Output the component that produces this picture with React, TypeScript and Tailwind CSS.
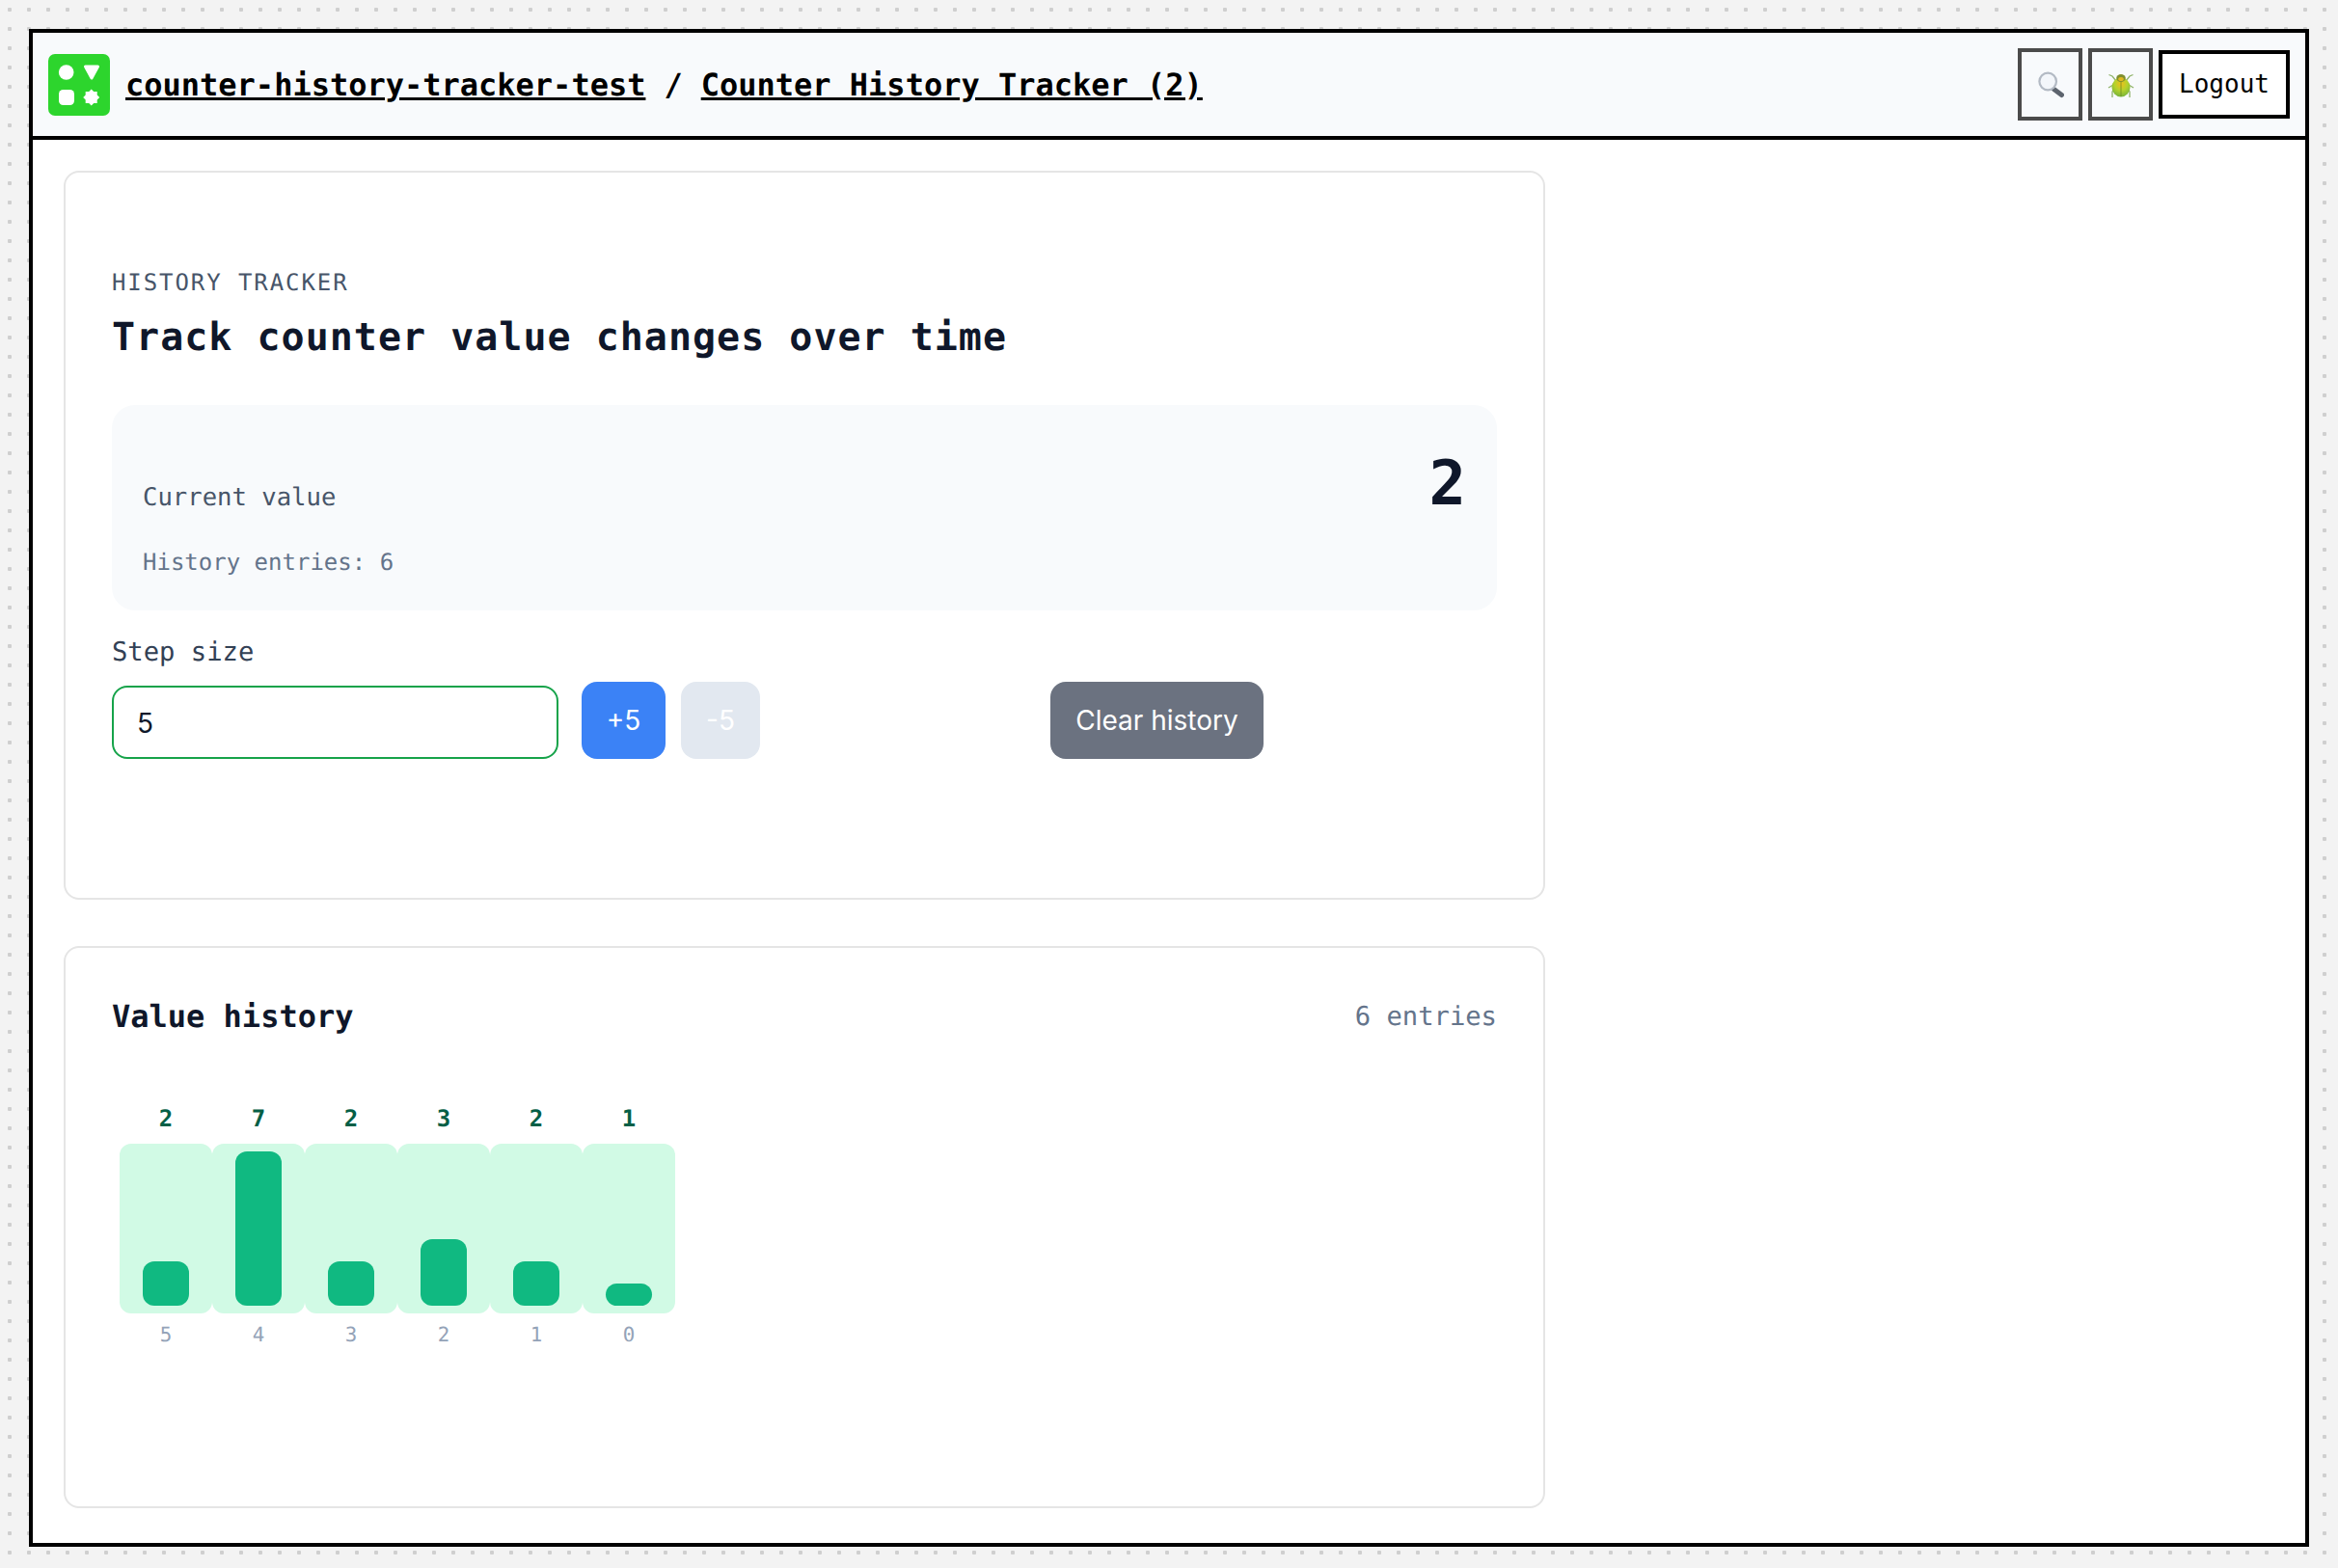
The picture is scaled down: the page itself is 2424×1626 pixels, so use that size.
const mono = "font-['DejaVu_Sans_Mono',monospace]";

const history = [
  { value: 2, index: 5 },
  { value: 7, index: 4 },
  { value: 2, index: 3 },
  { value: 3, index: 2 },
  { value: 2, index: 1 },
  { value: 1, index: 0 },
];

// 8 pointed badge in the logo
const starPoints = Array.from({ length: 16 }, (_, i) => {
  const r = i % 2 === 0 ? 8.5 : 6.5;
  const a = (i * Math.PI) / 8 - Math.PI / 2;
  return `${(44.7 + r * Math.cos(a)).toFixed(2)},${(45 + r * Math.sin(a)).toFixed(2)}`;
}).join(" ");

function Logo() {
  return (
    <svg viewBox="0 0 64 64" className="w-16 h-16 shrink-0">
      <rect width="64" height="64" rx="7" fill="#2dd52d" />
      <circle cx="18.700" cy="19" r="7.800" fill="#fff" />
      <path d="M38.500 13h13l-6.500 12z" fill="#fff" stroke="#fff" strokeWidth="3" strokeLinejoin="round" />
      <rect x="11" y="37" width="16" height="16" rx="4.500" fill="#fff" />
      <polygon points={starPoints} fill="#fff" />
    </svg>
  );
}

function Magnifier() {
  return (
    <svg viewBox="0 0 28 28" className="w-7 h-7">
      <line x1="17.500" y1="18.500" x2="25.500" y2="24.500" stroke="#5d646e" strokeWidth="5" strokeLinecap="round" />
      <circle cx="11.200" cy="10.500" r="8.800" fill="#f3f6fa" stroke="#b3bac4" strokeWidth="2.200" />
    </svg>
  );
}

function Bug() {
  return (
    <svg viewBox="0 0 28 28" className="w-7 h-7">
      <defs>
        <radialGradient id="shell" cx="50%" cy="32%" r="70%">
          <stop offset="0%" stopColor="#f0c01c" />
          <stop offset="50%" stopColor="#b4d22c" />
          <stop offset="100%" stopColor="#74b23c" />
        </radialGradient>
      </defs>
      <g stroke="#8fb36a" strokeWidth="1.300" fill="none">
        <path d="M9 10L5 5 1.500 3.500" />
        <path d="M19 10l4-5 3.500-1.500" />
        <path d="M6 14l-5 3" />
        <path d="M22 14l5 3" />
        <path d="M7 20l-2 1 0 6" />
        <path d="M21 20l2 1 0 6" />
      </g>
      <ellipse cx="14" cy="16.500" rx="9.500" ry="10" fill="url(#shell)" />
      <ellipse cx="14" cy="7" rx="4.800" ry="4" fill="#7f8f2e" />
      <ellipse cx="14" cy="8" rx="2.800" ry="2" fill="#e0b820" />
      <line x1="14" y1="11" x2="14" y2="26" stroke="#6a8a24" strokeWidth="0.800" />
    </svg>
  );
}

export default function App() {
  return (
    <div className={`min-h-[1626px] pt-[30px] px-[30px] bg-[#f3f3f3] bg-[radial-gradient(circle,#cfcfcf_2px,transparent_2.500px)] bg-[size:20px_20px] [text-rendering:geometricPrecision] ${mono}`}>
      <div className="h-[1574px] border-4 border-black bg-white flex flex-col">
        {/* Top bar */}
        <header className="h-[111px] shrink-0 border-b-4 border-black bg-[#f8fafc] flex items-center justify-between pl-4 pr-4">
          <div className="flex items-center gap-4 text-[32px] text-black font-bold">
            <Logo />
            <div className="flex gap-[19px]">
              <a className="underline">counter-history-tracker-test</a>
              <span>/</span>
              <a className="underline">Counter History Tracker (2)</a>
            </div>
          </div>
          <div className="flex items-center gap-[6px]">
            <button className="w-[67px] h-[75px] border-4 border-[#4b4b4b] flex items-center justify-center">
              <Magnifier />
            </button>
            <button className="w-[67px] h-[75px] border-4 border-[#4b4b4b] flex items-center justify-center">
              <Bug />
            </button>
            <button className="w-[136px] h-[71px] border-4 border-black bg-white text-[26px] text-black">Logout</button>
          </div>
        </header>

        <main className="flex-1 pt-8 pl-8 flex flex-col gap-[48px]">
          {/* Counter card */}
          <section className="w-[1536px] h-[756px] border-2 border-[#e5e5e5] rounded-2xl px-[48px] pt-[98px]">
            <p className="text-2xl leading-[32px] tracking-[1.920px] text-[#475569]">HISTORY TRACKER</p>
            <h1 className="mt-[13px] text-[40px] leading-[56px] tracking-[1px] font-bold text-[#0f172a]">Track counter value changes over time</h1>

            <div className="mt-[42px] h-[213px] rounded-3xl bg-[#f8fafc] px-8 pt-[42px] flex justify-between items-start">
              <div>
                <p className="mt-[36px] text-[25.600px] leading-[36px] text-[#475569]">Current value</p>
                <p className="mt-[33px] text-2xl leading-[32px] text-[#64748b]">History entries: 6</p>
              </div>
              <div className="mt-[8px] text-[64px] leading-[64px] font-bold text-[#0f172a]">2</div>
            </div>

            <label className="block mt-[28px] text-[27.200px] leading-[32px] text-[#334155]">Step size</label>
            <div className="mt-[14px] flex items-end font-['Inter',sans-serif] text-[28px]">
              <input
                readOnly
                value="5"
                className="w-[463px] h-[76px] rounded-2xl border-2 border-[#16a34a] bg-white px-[24px] pt-[2px] text-[28px] text-[#0f172a] outline-none"
              />
              <button className="ml-[24px] w-[87px] h-[80px] rounded-2xl bg-[#3b82f6] text-white">+5</button>
              <button className="ml-4 w-[82px] h-[80px] rounded-2xl bg-[#e2e8f0] text-white">-5</button>
              <button className="ml-[301px] w-[221px] h-[80px] rounded-2xl bg-[#6b7280] text-white">Clear history</button>
            </div>
          </section>

          {/* History card */}
          <section className="w-[1536px] h-[583px] border-2 border-[#e5e5e5] rounded-2xl px-[48px] pt-[46px]">
            <div className="flex items-center justify-between">
              <h2 className="text-[32px] leading-[48px] font-bold text-[#0f172a]">Value history</h2>
              <span className="text-[27.200px] leading-[48px] pt-[2px] text-[#64748b]">6 entries</span>
            </div>
            <div className="mt-[65px] ml-2 flex">
              {history.map((item) => (
                <div key={item.index} className="w-[96px] flex flex-col items-center">
                  <span className="text-2xl leading-[32px] font-bold text-[#065f46]">{item.value}</span>
                  <div className="mt-[10px] w-full h-[176px] rounded-xl bg-[#d1fae5] flex items-end justify-center pb-2">
                    <div className="w-12 rounded-xl bg-[#10b981]" style={{ height: (item.value * 160) / 7 }} />
                  </div>
                  <span className="mt-[8px] text-[20.800px] leading-[28px] text-[#94a3b8]">{item.index}</span>
                </div>
              ))}
            </div>
          </section>
        </main>
      </div>
    </div>
  );
}
